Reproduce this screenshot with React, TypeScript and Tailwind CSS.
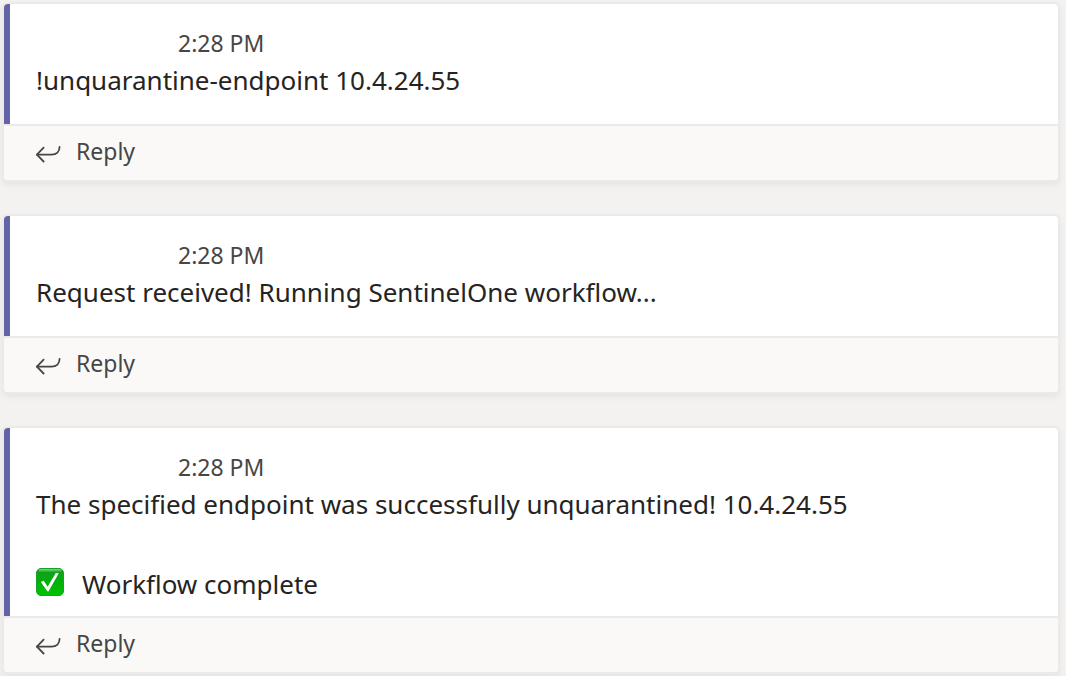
import React from 'react';

type Message = {
  id: number;
  time: string;
  text: string;
  status?: string;
};

const messages: Message[] = [
  { id: 1, time: '2:28 PM', text: '!unquarantine-endpoint 10.4.24.55' },
  { id: 2, time: '2:28 PM', text: 'Request received! Running SentinelOne workflow...' },
  {
    id: 3,
    time: '2:28 PM',
    text: 'The specified endpoint was successfully unquarantined! 10.4.24.55',
    status: 'Workflow complete',
  },
];

function ReplyIcon() {
  return (
    <svg
      className="h-7 w-7 shrink-0"
      viewBox="0 0 28 28"
      fill="none"
      stroke="currentColor"
      strokeWidth="1.8"
      strokeLinecap="round"
      strokeLinejoin="round"
      aria-hidden="true"
    >
      <path d="M7.6 8.6 0.9 15.6l6.7 6.9" />
      <path d="M0.9 15.6H15.5C20.5 15.6 23.6 12.6 23.6 7.8" />
    </svg>
  );
}

function CheckIcon() {
  return (
    <svg className="mt-1 h-7 w-7 shrink-0" viewBox="0 0 28 28" aria-hidden="true">
      <defs>
        <linearGradient id="check-fill" x1="0" y1="0" x2="0" y2="1">
          <stop offset="0" stopColor="#169a22" />
          <stop offset="0.5" stopColor="#02b00b" />
          <stop offset="1" stopColor="#00c400" />
        </linearGradient>
        <linearGradient id="check-gloss" x1="0" y1="0" x2="0" y2="1">
          <stop offset="0" stopColor="#7fd685" />
          <stop offset="1" stopColor="#7fd685" stopOpacity="0" />
        </linearGradient>
      </defs>
      <rect x="0.5" y="0.5" width="27" height="27" rx="4.5" fill="url(#check-fill)" stroke="#14a322" />
      <rect x="2.5" y="1" width="23" height="3.5" rx="1.7" fill="url(#check-gloss)" />
      <path d="M4.8 14 7.8 12.8l3.8 6L19.8 5l3 .2L12.4 23.6h-.9z" fill="#fff" />
    </svg>
  );
}

function MessageCard({ message }: { message: Message }) {
  return (
    <article className="overflow-hidden rounded bg-white shadow-[0_0_0_2px_#ebeae9,0_3px_6px_2px_rgba(0,0,0,0.06)]">
      <div
        className={`border-l-[6px] border-[#6264a7] pl-[26px] pt-6 ${message.status ? 'pb-3' : 'pb-6'}`}
      >
        <time className="mb-0.5 block pl-[142px] text-[23px] leading-[30px] text-[#484644]">{message.time}</time>
        <p className="text-[26px] leading-10 text-[#252423]">{message.text}</p>
        {message.status && (
          <p className="mt-10 flex items-start gap-[18px] text-[26px] leading-10 text-[#252423]">
            <CheckIcon />
            {message.status}
          </p>
        )}
      </div>
      <button
        type="button"
        className="flex h-14 w-full items-center gap-3 border-t-2 border-[#ebeae9] bg-[#faf9f8] pl-8 text-left text-[23px] leading-[30px] text-[#484644]"
      >
        <ReplyIcon />
        <span className="pb-1">Reply</span>
      </button>
    </article>
  );
}

export default function App() {
  return (
    <main className="flex min-h-screen flex-col gap-9 bg-[#f3f2f1] pb-1 pl-1 pr-2 pt-1 font-['Noto_Sans','Open_Sans',sans-serif]">
      {messages.map((message) => (
        <MessageCard key={message.id} message={message} />
      ))}
    </main>
  );
}
